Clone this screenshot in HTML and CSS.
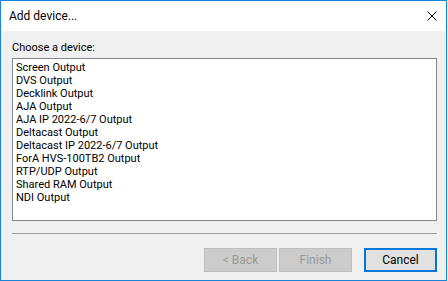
FILE: index.html
```html
<!DOCTYPE html>
<html>
<head>
<meta charset="utf-8">
<link rel="stylesheet" href="styles.css">
</head>
<body>
<div class="window">
  <div class="titlebar">
    <span class="title">Add device...</span>
    <svg class="close" width="10" height="10" viewBox="0 0 10 10"><path d="M0.5 0.5 L9.5 9.5 M9.5 0.5 L0.5 9.5" stroke="#000" stroke-width="1" fill="none"/></svg>
  </div>
  <div class="content">
    <div class="label">Choose a device:</div>
    <ul class="list">
      <li>Screen Output</li>
      <li>DVS Output</li>
      <li>Decklink Output</li>
      <li>AJA Output</li>
      <li>AJA IP 2022-6/7 Output</li>
      <li>Deltacast Output</li>
      <li>Deltacast IP 2022-6/7 Output</li>
      <li>ForA HVS-100TB2 Output</li>
      <li>RTP/UDP Output</li>
      <li>Shared RAM Output</li>
      <li>NDI Output</li>
    </ul>
    <div class="sep"></div>
    <div class="buttons">
      <button class="btn disabled">&lt; Back</button>
      <button class="btn disabled">Finish</button>
      <button class="btn default">Cancel</button>
    </div>
  </div>
</div>
</body>
</html>
```
FILE: styles.css
```css
html, body {
  margin: 0;
  padding: 0;
  background: #ffffff;
}
body {
  font-family: Roboto, "Open Sans", sans-serif;
  font-size: 11px;
  color: #000;
}
.window {
  width: 447px;
  height: 281px;
  box-sizing: border-box;
  border: 1px solid #1883d7;
  display: flex;
  flex-direction: column;
}
.titlebar {
  height: 30px;
  flex: none;
  background: #fff;
  display: flex;
  align-items: center;
  justify-content: space-between;
  padding: 0 8px 0 8px;
}
.title {
  font-size: 12px;
  margin-top: -1px;
}
.close {
  display: block;
  margin-right: 1px;
}
.content {
  flex: 1;
  background: #f0f0f0;
  padding: 9px 9px 0 11px;
  display: flex;
  flex-direction: column;
}
.label {
  line-height: 15px;
  height: 15px;
  margin-bottom: 3px;
}
.list {
  list-style: none;
  margin: 0;
  padding: 2px 3px 0 3px;
  height: 163px;
  width: 425px;
  box-sizing: border-box;
  background: #fff;
  border: 1px solid #828790;
}
.list li {
  line-height: 13px;
  height: 13px;
  white-space: nowrap;
}
.sep {
  width: 425px;
  height: 1px;
  background: #a0a0a0;
  margin-top: 12px;
}
.buttons {
  display: flex;
  justify-content: flex-end;
  width: 425px;
  margin-top: 14px;
}
.btn {
  font-family: inherit;
  font-size: 12px;
  width: 73px;
  height: 24px;
  box-sizing: border-box;
  padding: 0;
  margin: 0;
  background: #e1e1e1;
  border: 1px solid #adadad;
  color: #000;
}
.btn.disabled {
  background: #cccccc;
  border-color: #bfbfbf;
  color: #9a9a9a;
}
.btn.disabled + .btn.disabled {
  margin-left: 2px;
}
.btn.default {
  border: 2px solid #0078d7;
  margin-left: 12px;
}
```
